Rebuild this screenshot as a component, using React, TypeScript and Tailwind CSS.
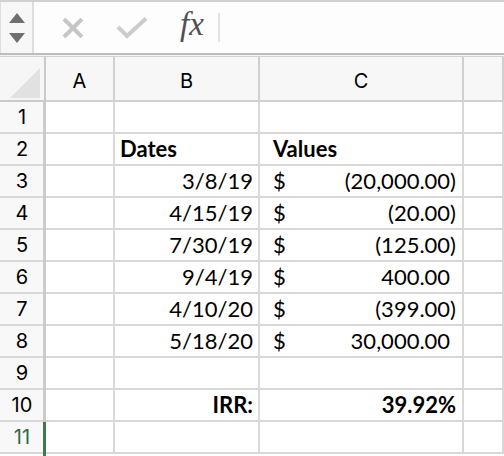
import React from 'react'

const CELL_FONT = { fontFamily: 'Lato, "Open Sans", sans-serif' }
const HEAD_FONT = { fontFamily: 'Inter, "Liberation Sans", sans-serif' }

type Row = {
  date?: string
  value?: string
  neg?: boolean
  label?: string
  result?: string
  header?: boolean
}

const ROWS: Row[] = [
  {},
  { header: true },
  { date: '3/8/19', value: '(20,000.00)', neg: true },
  { date: '4/15/19', value: '(20.00)', neg: true },
  { date: '7/30/19', value: '(125.00)', neg: true },
  { date: '9/4/19', value: '400.00' },
  { date: '4/10/20', value: '(399.00)', neg: true },
  { date: '5/18/20', value: '30,000.00' },
  {},
  { label: 'IRR:', result: '39.92%' },
  {},
]

const cell = 'h-[32px] border-r-2 border-b-2 border-[#d8d8d8] flex items-end pb-[4px] leading-none text-[22px] text-black'

function FormulaBar() {
  return (
    <div>
      <div className="h-[53px] border-t-2 border-[#d0d0d0] flex items-center bg-[#fdfdfd]">
        {/* name box stepper */}
        <div className="w-[34px] h-full bg-[#f7f7f7] border-r-2 border-l border-[#dedede] flex flex-col items-center justify-center gap-[10px]">
          <svg width="16" height="10" viewBox="0 0 16 10"><polygon points="8,0 16,10 0,10" fill="#6f6f6f" /></svg>
          <svg width="16" height="10" viewBox="0 0 16 10"><polygon points="0,0 16,0 8,10" fill="#6f6f6f" /></svg>
        </div>
        <svg className="ml-[28px]" width="22" height="20" viewBox="0 0 22 20">
          <path d="M2 1 L20 19 M20 1 L2 19" stroke="#c6c6c6" strokeWidth="4" strokeLinecap="butt" />
        </svg>
        <svg className="ml-[32px]" width="32" height="22" viewBox="0 0 32 22">
          <path d="M2 10 L11 19 L30 1.5" stroke="#cccccc" strokeWidth="4" fill="none" />
        </svg>
        <span
          className="ml-[32px] italic text-[33px] text-[#505050] leading-none -mt-[6px]"
          style={{ fontFamily: '"Liberation Serif", "DejaVu Serif", serif' }}
        >
          fx
        </span>
        <div className="ml-[14px] w-[2px] h-[29px] bg-[#e3e3e3]" />
      </div>
      <div className="h-[2px] bg-[#bdbdbd]" />
      <div className="h-[1px] bg-[#f2f2f2]" />
      <div className="h-[1px] bg-[#d2d2d2]" />
    </div>
  )
}

export default function App() {
  return (
    <div className="w-[504px] h-[456px] overflow-hidden bg-white">
      <FormulaBar />
      <div className="grid grid-cols-[46px_69px_145px_204px_1fr]">
        {/* column headers */}
        <div className="h-[45px] bg-[#f6f6f6] border-r-2 border-b-2 border-[#cacaca] relative">
          <svg className="absolute left-[10px] top-[11px]" width="30" height="30" viewBox="0 0 30 30">
            <polygon points="30,0 30,30 0,30" fill="#e1e1e1" />
          </svg>
        </div>
        {['A', 'B', 'C', ''].map(c => (
          <div
            key={c || 'D'}
            className="h-[45px] bg-[#f7f7f7] border-r-2 border-b-2 border-[#d0d0d0] flex items-center justify-center pt-[5px] text-[20px] text-black"
            style={HEAD_FONT}
          >
            {c}
          </div>
        ))}

        {ROWS.map((r, i) => {
          const n = i + 1
          const active = n === 11
          return (
            <React.Fragment key={n}>
              <div
                className={`h-[32px] bg-[#f8f8f8] border-b-2 border-[#d8d8d8] flex items-end justify-center pb-[5px] pr-[2px] leading-none text-[20px] relative ${
                  active ? 'text-[#2f6b3e]' : 'text-black'
                }`}
                style={HEAD_FONT}
              >
                {n}
                <div className={`absolute right-0 top-0 h-[34px] w-[3px] ${active ? 'bg-[#3b7a4a]' : 'bg-[#cbcbcb] w-[2px]'}`} />
              </div>
              <div className={cell} style={CELL_FONT} />
              <div className={`${cell} ${r.header ? 'pl-[5px] font-bold' : 'justify-end pr-[5px]'} ${r.label ? 'font-bold' : ''}`} style={CELL_FONT}>
                {r.header ? 'Dates' : r.date ?? r.label ?? ''}
              </div>
              <div
                className={`${cell} pl-[13px] pr-[6px] ${r.header || r.result ? 'font-bold' : ''} ${r.result ? 'justify-end' : 'justify-between'}`}
                style={CELL_FONT}
              >
                {r.header && 'Values'}
                {r.value && (
                  <>
                    <span>$</span>
                    <span>
                      {r.value}
                      {!r.neg && <span className="invisible">)</span>}
                    </span>
                  </>
                )}
                {r.result}
              </div>
              <div className={cell} style={CELL_FONT} />
            </React.Fragment>
          )
        })}
      </div>
    </div>
  )
}
